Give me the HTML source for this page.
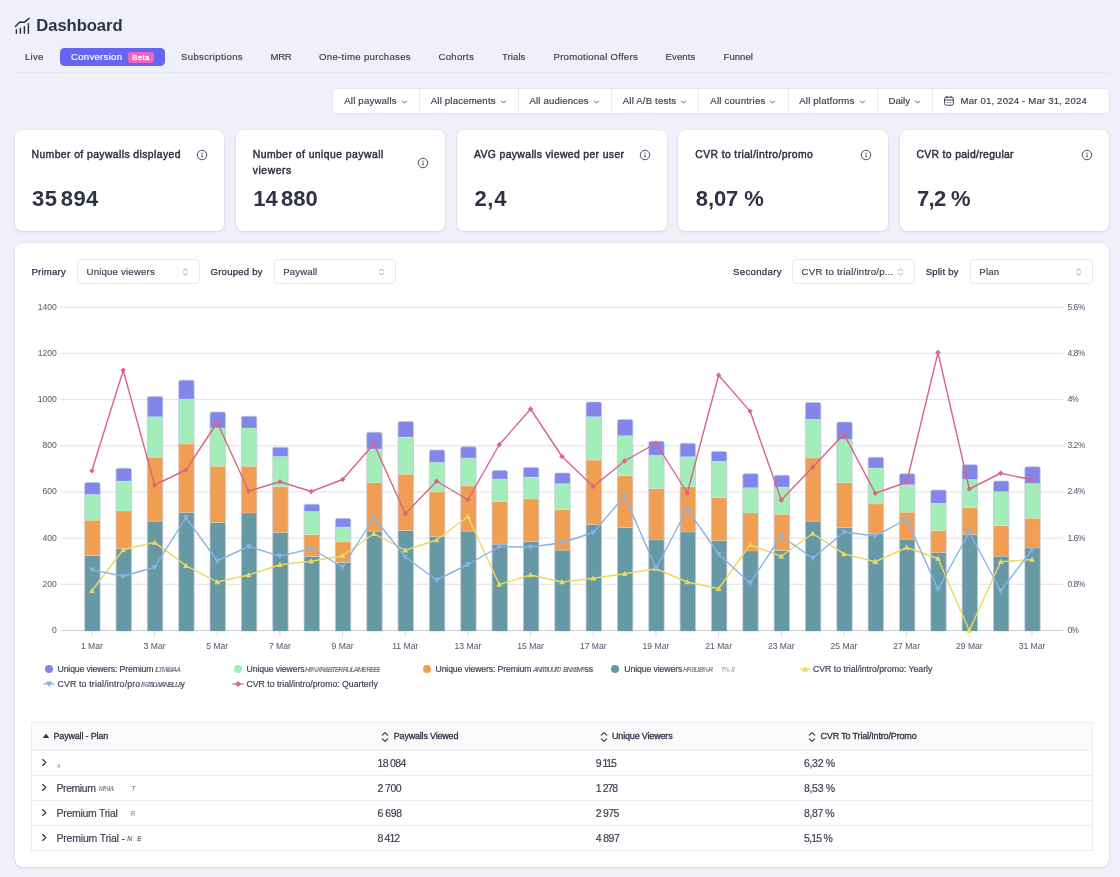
<!DOCTYPE html>
<html lang="en"><head><meta charset="utf-8"><title>Dashboard</title>
<style>
html,body{margin:0;padding:0;}
body{width:1120px;height:877px;overflow:hidden;background:#f0f0fa;font-family:"Liberation Sans",sans-serif;position:relative;}
.t{position:absolute;white-space:nowrap;font-family:"Liberation Sans",sans-serif;}
</style></head><body><div id="root" style="position:absolute;left:0;top:0;width:1120px;height:877px;will-change:transform;">
<svg style="position:absolute;left:0px;top:0px" width="40" height="40" viewBox="0 0 40 40" fill="none" stroke="#2f3147" stroke-width="1.5" stroke-linecap="round" stroke-linejoin="round">
<path d="M15.4 26.5L19.6 22.3Q19.9 22.1 20.3 22.1L24.2 22.2Q24.6 22.2 24.9 21.9L29.2 18.2"/><path d="M16.4 29.7V33.2"/><path d="M20.4 28.4V33.2"/><path d="M24.4 26.7V33.2"/><path d="M28.4 23.8V33.2"/></svg>
<span class="t" style="left:36.30px;top:15.60px;height:20px;line-height:20px;font-size:16.6px;color:#2f3147;font-weight:700;letter-spacing:-0.056px;">Dashboard</span>
<span class="t" style="left:25.00px;top:47.00px;height:20px;line-height:20px;font-size:9.6px;color:#3c3e54;-webkit-text-stroke:0.18px #3c3e54;letter-spacing:0.222px;">Live</span>
<div style="position:absolute;left:59.5px;top:47.5px;width:105.25px;height:18.799999999999997px;background:#6466f1;border-radius:4.5px;"></div>
<span class="t" style="left:71.00px;top:47.00px;height:20px;line-height:20px;font-size:9.6px;color:#ffffff;-webkit-text-stroke:0.18px #ffffff;letter-spacing:0.274px;">Conversion</span>
<div style="position:absolute;left:128.25px;top:52.3px;width:25.5px;height:10.300000000000004px;background:#f363c0;border-radius:3px;"></div>
<span class="t" style="left:132.30px;top:48.00px;height:20px;line-height:20px;font-size:7.7px;color:#ffffff;letter-spacing:0.390px;-webkit-text-stroke:0.3px #fff;">Beta</span>
<span class="t" style="left:181.00px;top:47.00px;height:20px;line-height:20px;font-size:9.6px;color:#3c3e54;-webkit-text-stroke:0.18px #3c3e54;letter-spacing:0.336px;">Subscriptions</span>
<span class="t" style="left:270.60px;top:47.00px;height:20px;line-height:20px;font-size:9.6px;color:#3c3e54;-webkit-text-stroke:0.18px #3c3e54;letter-spacing:-0.421px;">MRR</span>
<span class="t" style="left:319.00px;top:47.00px;height:20px;line-height:20px;font-size:9.6px;color:#3c3e54;-webkit-text-stroke:0.18px #3c3e54;letter-spacing:0.309px;">One-time purchases</span>
<span class="t" style="left:438.50px;top:47.00px;height:20px;line-height:20px;font-size:9.6px;color:#3c3e54;-webkit-text-stroke:0.18px #3c3e54;letter-spacing:0.269px;">Cohorts</span>
<span class="t" style="left:502.00px;top:47.00px;height:20px;line-height:20px;font-size:9.6px;color:#3c3e54;-webkit-text-stroke:0.18px #3c3e54;letter-spacing:0.065px;">Trials</span>
<span class="t" style="left:553.50px;top:47.00px;height:20px;line-height:20px;font-size:9.6px;color:#3c3e54;-webkit-text-stroke:0.18px #3c3e54;letter-spacing:0.258px;">Promotional Offers</span>
<span class="t" style="left:665.50px;top:47.00px;height:20px;line-height:20px;font-size:9.6px;color:#3c3e54;-webkit-text-stroke:0.18px #3c3e54;letter-spacing:0.108px;">Events</span>
<span class="t" style="left:723.50px;top:47.00px;height:20px;line-height:20px;font-size:9.6px;color:#3c3e54;-webkit-text-stroke:0.18px #3c3e54;letter-spacing:0.024px;">Funnel</span>
<div style="position:absolute;left:14px;top:71.6px;width:1095px;height:1.0px;background:#e6e6f1;"></div>
<div style="position:absolute;left:333px;top:89px;width:775.75px;height:23.5px;background:#fff;border-radius:4px;box-shadow:0 0 0 1px #e6e6f0, 0 1px 2px rgba(40,40,80,.06);"></div>
<div style="position:absolute;left:418.75px;top:89px;width:1.0px;height:23.5px;background:#e9e9f2;"></div>
<div style="position:absolute;left:517.75px;top:89px;width:1.0px;height:23.5px;background:#e9e9f2;"></div>
<div style="position:absolute;left:610.75px;top:89px;width:1.0px;height:23.5px;background:#e9e9f2;"></div>
<div style="position:absolute;left:697.75px;top:89px;width:1.0px;height:23.5px;background:#e9e9f2;"></div>
<div style="position:absolute;left:787.75px;top:89px;width:1.0px;height:23.5px;background:#e9e9f2;"></div>
<div style="position:absolute;left:876.5px;top:89px;width:1.0px;height:23.5px;background:#e9e9f2;"></div>
<div style="position:absolute;left:932.0px;top:89px;width:1.0px;height:23.5px;background:#e9e9f2;"></div>
<span class="t" style="left:344.25px;top:91.00px;height:20px;line-height:20px;font-size:9.6px;color:#3c3e54;-webkit-text-stroke:0.18px #3c3e54;letter-spacing:0.196px;">All paywalls</span>
<svg style="position:absolute;left:401px;top:98.55px" width="7" height="6" viewBox="-1 -3 7 6" fill="none" stroke="#5b5d75" stroke-width="1" stroke-linecap="round" stroke-linejoin="round"><path d="M0.4 -1.1L2.5 1.1L4.6 -1.1"/></svg>
<span class="t" style="left:430.75px;top:91.00px;height:20px;line-height:20px;font-size:9.6px;color:#3c3e54;-webkit-text-stroke:0.18px #3c3e54;letter-spacing:0.184px;">All placements</span>
<svg style="position:absolute;left:500px;top:98.55px" width="7" height="6" viewBox="-1 -3 7 6" fill="none" stroke="#5b5d75" stroke-width="1" stroke-linecap="round" stroke-linejoin="round"><path d="M0.4 -1.1L2.5 1.1L4.6 -1.1"/></svg>
<span class="t" style="left:529.50px;top:91.00px;height:20px;line-height:20px;font-size:9.6px;color:#3c3e54;-webkit-text-stroke:0.18px #3c3e54;letter-spacing:0.165px;">All audiences</span>
<svg style="position:absolute;left:593px;top:98.55px" width="7" height="6" viewBox="-1 -3 7 6" fill="none" stroke="#5b5d75" stroke-width="1" stroke-linecap="round" stroke-linejoin="round"><path d="M0.4 -1.1L2.5 1.1L4.6 -1.1"/></svg>
<span class="t" style="left:622.75px;top:91.00px;height:20px;line-height:20px;font-size:9.6px;color:#3c3e54;-webkit-text-stroke:0.18px #3c3e54;letter-spacing:0.175px;">All A/B tests</span>
<svg style="position:absolute;left:680px;top:98.55px" width="7" height="6" viewBox="-1 -3 7 6" fill="none" stroke="#5b5d75" stroke-width="1" stroke-linecap="round" stroke-linejoin="round"><path d="M0.4 -1.1L2.5 1.1L4.6 -1.1"/></svg>
<span class="t" style="left:710.25px;top:91.00px;height:20px;line-height:20px;font-size:9.6px;color:#3c3e54;-webkit-text-stroke:0.18px #3c3e54;letter-spacing:0.228px;">All countries</span>
<svg style="position:absolute;left:769px;top:98.55px" width="7" height="6" viewBox="-1 -3 7 6" fill="none" stroke="#5b5d75" stroke-width="1" stroke-linecap="round" stroke-linejoin="round"><path d="M0.4 -1.1L2.5 1.1L4.6 -1.1"/></svg>
<span class="t" style="left:799.25px;top:91.00px;height:20px;line-height:20px;font-size:9.6px;color:#3c3e54;-webkit-text-stroke:0.18px #3c3e54;letter-spacing:0.187px;">All platforms</span>
<svg style="position:absolute;left:858.5px;top:98.55px" width="7" height="6" viewBox="-1 -3 7 6" fill="none" stroke="#5b5d75" stroke-width="1" stroke-linecap="round" stroke-linejoin="round"><path d="M0.4 -1.1L2.5 1.1L4.6 -1.1"/></svg>
<span class="t" style="left:888.50px;top:91.00px;height:20px;line-height:20px;font-size:9.6px;color:#3c3e54;-webkit-text-stroke:0.18px #3c3e54;letter-spacing:0.032px;">Daily</span>
<svg style="position:absolute;left:914px;top:98.55px" width="7" height="6" viewBox="-1 -3 7 6" fill="none" stroke="#5b5d75" stroke-width="1" stroke-linecap="round" stroke-linejoin="round"><path d="M0.4 -1.1L2.5 1.1L4.6 -1.1"/></svg>
<svg style="position:absolute;left:943px;top:95px" width="12" height="12" viewBox="0 0 12 12" fill="none" stroke="#3f4159" stroke-width="1" stroke-linecap="round" stroke-linejoin="round"><rect x="1.6" y="2.2" width="8.7" height="8" rx="1.6"/><path d="M1.6 5H10.3"/><path d="M4 1.3V2.6"/><path d="M8 1.3V2.6"/><path d="M3.6 7.6H5.4M6.6 7.6H8.4" stroke-width="0.9" stroke-opacity="0.6"/></svg>
<span class="t" style="left:960.50px;top:91.00px;height:20px;line-height:20px;font-size:9.6px;color:#3c3e54;-webkit-text-stroke:0.18px #3c3e54;letter-spacing:0.179px;">Mar 01, 2024 - Mar 31, 2024</span>
<div style="position:absolute;left:14.5px;top:129.5px;width:209.5px;height:101.5px;background:#fff;border-radius:7px;box-shadow:0 0 0 0.5px rgba(40,40,60,.07),0 1px 2.5px rgba(30,30,50,.10);"></div>
<span class="t" style="left:31.50px;top:144.75px;height:20px;line-height:20px;font-size:10.4px;color:#2f3147;letter-spacing:0.405px;-webkit-text-stroke:0.45px #2f3147;">Number of paywalls displayed</span>
<svg style="position:absolute;left:196.0px;top:148.9px" width="12" height="12" viewBox="-6 -6 12 12" fill="none" stroke="#4a4d66" stroke-width="1"><circle cx="0" cy="0" r="4.75"/><path d="M0 -0.2V2.5" stroke-width="1.2" stroke-linecap="butt"/><circle cx="0" cy="-1.75" r="0.65" fill="#4a4d66" stroke="none"/></svg>
<span class="t" style="left:32.00px;top:189.30px;height:20px;line-height:20px;font-size:22px;color:#2f3147;font-weight:700;letter-spacing:0.454px;">35<i style="display:inline-block;width:3.30px"></i>894</span>
<div style="position:absolute;left:235.75px;top:129.5px;width:209.5px;height:101.5px;background:#fff;border-radius:7px;box-shadow:0 0 0 0.5px rgba(40,40,60,.07),0 1px 2.5px rgba(30,30,50,.10);"></div>
<span class="t" style="left:252.75px;top:144.75px;height:20px;line-height:20px;font-size:10.4px;color:#2f3147;letter-spacing:0.448px;-webkit-text-stroke:0.45px #2f3147;">Number of unique paywall</span>
<span class="t" style="left:252.75px;top:161.00px;height:20px;line-height:20px;font-size:10.4px;color:#2f3147;letter-spacing:0.535px;-webkit-text-stroke:0.45px #2f3147;">viewers</span>
<svg style="position:absolute;left:417.25px;top:156.95000000000002px" width="12" height="12" viewBox="-6 -6 12 12" fill="none" stroke="#4a4d66" stroke-width="1"><circle cx="0" cy="0" r="4.75"/><path d="M0 -0.2V2.5" stroke-width="1.2" stroke-linecap="butt"/><circle cx="0" cy="-1.75" r="0.65" fill="#4a4d66" stroke="none"/></svg>
<span class="t" style="left:253.25px;top:189.30px;height:20px;line-height:20px;font-size:22px;color:#2f3147;font-weight:700;letter-spacing:0.004px;">14<i style="display:inline-block;width:3.30px"></i>880</span>
<div style="position:absolute;left:457.0px;top:129.5px;width:209.5px;height:101.5px;background:#fff;border-radius:7px;box-shadow:0 0 0 0.5px rgba(40,40,60,.07),0 1px 2.5px rgba(30,30,50,.10);"></div>
<span class="t" style="left:474.00px;top:144.75px;height:20px;line-height:20px;font-size:10.4px;color:#2f3147;letter-spacing:0.365px;-webkit-text-stroke:0.45px #2f3147;">AVG paywalls viewed per user</span>
<svg style="position:absolute;left:638.5px;top:148.9px" width="12" height="12" viewBox="-6 -6 12 12" fill="none" stroke="#4a4d66" stroke-width="1"><circle cx="0" cy="0" r="4.75"/><path d="M0 -0.2V2.5" stroke-width="1.2" stroke-linecap="butt"/><circle cx="0" cy="-1.75" r="0.65" fill="#4a4d66" stroke="none"/></svg>
<span class="t" style="left:474.50px;top:189.30px;height:20px;line-height:20px;font-size:22px;color:#2f3147;font-weight:700;letter-spacing:0.639px;">2,4</span>
<div style="position:absolute;left:678.25px;top:129.5px;width:209.5px;height:101.5px;background:#fff;border-radius:7px;box-shadow:0 0 0 0.5px rgba(40,40,60,.07),0 1px 2.5px rgba(30,30,50,.10);"></div>
<span class="t" style="left:695.25px;top:144.75px;height:20px;line-height:20px;font-size:10.4px;color:#2f3147;letter-spacing:0.389px;-webkit-text-stroke:0.45px #2f3147;">CVR to trial/intro/promo</span>
<svg style="position:absolute;left:859.75px;top:148.9px" width="12" height="12" viewBox="-6 -6 12 12" fill="none" stroke="#4a4d66" stroke-width="1"><circle cx="0" cy="0" r="4.75"/><path d="M0 -0.2V2.5" stroke-width="1.2" stroke-linecap="butt"/><circle cx="0" cy="-1.75" r="0.65" fill="#4a4d66" stroke="none"/></svg>
<span class="t" style="left:695.75px;top:189.30px;height:20px;line-height:20px;font-size:22px;color:#2f3147;font-weight:700;letter-spacing:-0.082px;">8,07 %</span>
<div style="position:absolute;left:899.5px;top:129.5px;width:209.5px;height:101.5px;background:#fff;border-radius:7px;box-shadow:0 0 0 0.5px rgba(40,40,60,.07),0 1px 2.5px rgba(30,30,50,.10);"></div>
<span class="t" style="left:916.50px;top:144.75px;height:20px;line-height:20px;font-size:10.4px;color:#2f3147;letter-spacing:0.324px;-webkit-text-stroke:0.45px #2f3147;">CVR to paid/regular</span>
<svg style="position:absolute;left:1081.0px;top:148.9px" width="12" height="12" viewBox="-6 -6 12 12" fill="none" stroke="#4a4d66" stroke-width="1"><circle cx="0" cy="0" r="4.75"/><path d="M0 -0.2V2.5" stroke-width="1.2" stroke-linecap="butt"/><circle cx="0" cy="-1.75" r="0.65" fill="#4a4d66" stroke="none"/></svg>
<span class="t" style="left:917.00px;top:189.30px;height:20px;line-height:20px;font-size:22px;color:#2f3147;font-weight:700;letter-spacing:-0.651px;">7,2 %</span>
<div style="position:absolute;left:14.5px;top:242.5px;width:1094.25px;height:624.5px;background:#fff;border-radius:8px;box-shadow:0 0 0 0.5px rgba(40,40,60,.07),0 1px 2.5px rgba(30,30,50,.10);"></div>
<span class="t" style="left:31.50px;top:261.60px;height:20px;line-height:20px;font-size:9.6px;color:#2f3147;letter-spacing:0.205px;-webkit-text-stroke:0.25px #2f3147;">Primary</span>
<div style="position:absolute;left:77.0px;top:259.1px;width:122.75px;height:24.599999999999966px;background:#fff;border-radius:4.5px;box-shadow:inset 0 0 0 1px #e8e8ee;"></div>
<span class="t" style="left:86.50px;top:261.60px;height:20px;line-height:20px;font-size:9.6px;color:#3c3e54;-webkit-text-stroke:0.18px #3c3e54;letter-spacing:0.205px;">Unique viewers</span>
<svg style="position:absolute;left:181.5px;top:266.5px" width="7" height="10" viewBox="0 0 7 10" fill="none" stroke="#9698ab" stroke-width="0.95" stroke-linecap="round" stroke-linejoin="round"><path d="M1.5 3.6L3.5 1.9L5.5 3.6"/><path d="M1.5 6.4L3.5 8.1L5.5 6.4"/></svg>
<span class="t" style="left:210.50px;top:261.60px;height:20px;line-height:20px;font-size:9.6px;color:#2f3147;letter-spacing:0.213px;-webkit-text-stroke:0.25px #2f3147;">Grouped by</span>
<div style="position:absolute;left:273.75px;top:259.1px;width:122.5px;height:24.599999999999966px;background:#fff;border-radius:4.5px;box-shadow:inset 0 0 0 1px #e8e8ee;"></div>
<span class="t" style="left:283.25px;top:261.60px;height:20px;line-height:20px;font-size:9.6px;color:#3c3e54;-webkit-text-stroke:0.18px #3c3e54;letter-spacing:0.131px;">Paywall</span>
<svg style="position:absolute;left:378.0px;top:266.5px" width="7" height="10" viewBox="0 0 7 10" fill="none" stroke="#9698ab" stroke-width="0.95" stroke-linecap="round" stroke-linejoin="round"><path d="M1.5 3.6L3.5 1.9L5.5 3.6"/><path d="M1.5 6.4L3.5 8.1L5.5 6.4"/></svg>
<span class="t" style="left:733.00px;top:261.60px;height:20px;line-height:20px;font-size:9.6px;color:#2f3147;letter-spacing:0.323px;-webkit-text-stroke:0.25px #2f3147;">Secondary</span>
<div style="position:absolute;left:792.1px;top:259.1px;width:122.89999999999998px;height:24.599999999999966px;background:#fff;border-radius:4.5px;box-shadow:inset 0 0 0 1px #e8e8ee;"></div>
<span class="t" style="left:801.60px;top:261.60px;height:20px;line-height:20px;font-size:9.6px;color:#3c3e54;-webkit-text-stroke:0.18px #3c3e54;letter-spacing:0.242px;">CVR to trial/intro/p...</span>
<svg style="position:absolute;left:897.1px;top:266.5px" width="7" height="10" viewBox="0 0 7 10" fill="none" stroke="#9698ab" stroke-width="0.95" stroke-linecap="round" stroke-linejoin="round"><path d="M1.5 3.6L3.5 1.9L5.5 3.6"/><path d="M1.5 6.4L3.5 8.1L5.5 6.4"/></svg>
<span class="t" style="left:925.70px;top:261.60px;height:20px;line-height:20px;font-size:9.6px;color:#2f3147;letter-spacing:0.190px;-webkit-text-stroke:0.25px #2f3147;">Split by</span>
<div style="position:absolute;left:969.8px;top:259.1px;width:122.90000000000009px;height:24.599999999999966px;background:#fff;border-radius:4.5px;box-shadow:inset 0 0 0 1px #e8e8ee;"></div>
<span class="t" style="left:979.30px;top:261.60px;height:20px;line-height:20px;font-size:9.6px;color:#3c3e54;-webkit-text-stroke:0.18px #3c3e54;letter-spacing:0.196px;">Plan</span>
<svg style="position:absolute;left:1074.5px;top:266.5px" width="7" height="10" viewBox="0 0 7 10" fill="none" stroke="#9698ab" stroke-width="0.95" stroke-linecap="round" stroke-linejoin="round"><path d="M1.5 3.6L3.5 1.9L5.5 3.6"/><path d="M1.5 6.4L3.5 8.1L5.5 6.4"/></svg>
<svg style="position:absolute;left:0;top:0" width="1120" height="877" viewBox="0 0 1120 877">
<rect x="60.75" y="306.65" width="1002.5" height="1.2" fill="#e6e6e8"/>
<rect x="60.75" y="352.83" width="1002.5" height="1.2" fill="#e6e6e8"/>
<rect x="60.75" y="399.01" width="1002.5" height="1.2" fill="#e6e6e8"/>
<rect x="60.75" y="445.19" width="1002.5" height="1.2" fill="#e6e6e8"/>
<rect x="60.75" y="491.37" width="1002.5" height="1.2" fill="#e6e6e8"/>
<rect x="60.75" y="537.55" width="1002.5" height="1.2" fill="#e6e6e8"/>
<rect x="60.75" y="583.73" width="1002.5" height="1.2" fill="#e6e6e8"/>
<rect x="60.75" y="629.90" width="1002.5" height="1.2" fill="#d4d4d8"/>
<rect x="91.40" y="630.50" width="1" height="6.2" fill="#d6d6da"/>
<rect x="154.07" y="630.50" width="1" height="6.2" fill="#d6d6da"/>
<rect x="216.75" y="630.50" width="1" height="6.2" fill="#d6d6da"/>
<rect x="279.42" y="630.50" width="1" height="6.2" fill="#d6d6da"/>
<rect x="342.10" y="630.50" width="1" height="6.2" fill="#d6d6da"/>
<rect x="404.77" y="630.50" width="1" height="6.2" fill="#d6d6da"/>
<rect x="467.44" y="630.50" width="1" height="6.2" fill="#d6d6da"/>
<rect x="530.12" y="630.50" width="1" height="6.2" fill="#d6d6da"/>
<rect x="592.79" y="630.50" width="1" height="6.2" fill="#d6d6da"/>
<rect x="655.47" y="630.50" width="1" height="6.2" fill="#d6d6da"/>
<rect x="718.14" y="630.50" width="1" height="6.2" fill="#d6d6da"/>
<rect x="780.81" y="630.50" width="1" height="6.2" fill="#d6d6da"/>
<rect x="843.49" y="630.50" width="1" height="6.2" fill="#d6d6da"/>
<rect x="906.16" y="630.50" width="1" height="6.2" fill="#d6d6da"/>
<rect x="968.84" y="630.50" width="1" height="6.2" fill="#d6d6da"/>
<rect x="1031.51" y="630.50" width="1" height="6.2" fill="#d6d6da"/>
<rect x="84.70" y="555.60" width="15.4" height="75.50" fill="#6699a4"/>
<rect x="84.70" y="520.25" width="15.4" height="35.35" fill="#f09e52"/>
<rect x="84.70" y="494.50" width="15.4" height="25.75" fill="#a3edba"/>
<path d="M84.70 494.50V484.30Q84.70 482.50 86.50 482.50H98.30Q100.10 482.50 100.10 484.30V494.50Z" fill="#8087e8"/>
<rect x="84.70" y="494.10" width="15.4" height="0.8" fill="#ffffff" fill-opacity="0.28"/>
<rect x="84.70" y="519.85" width="15.4" height="0.8" fill="#ffffff" fill-opacity="0.28"/>
<rect x="84.70" y="555.20" width="15.4" height="0.8" fill="#ffffff" fill-opacity="0.28"/>
<path d="M84.70 630.50V484.30Q84.70 482.50 86.50 482.50H98.30Q100.10 482.50 100.10 484.30V630.50" stroke="#c4c5da" stroke-opacity="0.8" stroke-width="0.9" fill="none"/>
<rect x="116.04" y="548.75" width="15.4" height="82.35" fill="#6699a4"/>
<rect x="116.04" y="511.00" width="15.4" height="37.75" fill="#f09e52"/>
<rect x="116.04" y="481.00" width="15.4" height="30.00" fill="#a3edba"/>
<path d="M116.04 481.00V470.05Q116.04 468.25 117.84 468.25H129.64Q131.44 468.25 131.44 470.05V481.00Z" fill="#8087e8"/>
<rect x="116.04" y="480.60" width="15.4" height="0.8" fill="#ffffff" fill-opacity="0.28"/>
<rect x="116.04" y="510.60" width="15.4" height="0.8" fill="#ffffff" fill-opacity="0.28"/>
<rect x="116.04" y="548.35" width="15.4" height="0.8" fill="#ffffff" fill-opacity="0.28"/>
<path d="M116.04 630.50V470.05Q116.04 468.25 117.84 468.25H129.64Q131.44 468.25 131.44 470.05V630.50" stroke="#c4c5da" stroke-opacity="0.8" stroke-width="0.9" fill="none"/>
<rect x="147.37" y="521.25" width="15.4" height="109.85" fill="#6699a4"/>
<rect x="147.37" y="457.25" width="15.4" height="64.00" fill="#f09e52"/>
<rect x="147.37" y="416.75" width="15.4" height="40.50" fill="#a3edba"/>
<path d="M147.37 416.75V398.30Q147.37 396.50 149.17 396.50H160.97Q162.77 396.50 162.77 398.30V416.75Z" fill="#8087e8"/>
<rect x="147.37" y="416.35" width="15.4" height="0.8" fill="#ffffff" fill-opacity="0.28"/>
<rect x="147.37" y="456.85" width="15.4" height="0.8" fill="#ffffff" fill-opacity="0.28"/>
<rect x="147.37" y="520.85" width="15.4" height="0.8" fill="#ffffff" fill-opacity="0.28"/>
<path d="M147.37 630.50V398.30Q147.37 396.50 149.17 396.50H160.97Q162.77 396.50 162.77 398.30V630.50" stroke="#c4c5da" stroke-opacity="0.8" stroke-width="0.9" fill="none"/>
<rect x="178.71" y="512.50" width="15.4" height="118.60" fill="#6699a4"/>
<rect x="178.71" y="444.00" width="15.4" height="68.50" fill="#f09e52"/>
<rect x="178.71" y="399.00" width="15.4" height="45.00" fill="#a3edba"/>
<path d="M178.71 399.00V382.00Q178.71 380.20 180.51 380.20H192.31Q194.11 380.20 194.11 382.00V399.00Z" fill="#8087e8"/>
<rect x="178.71" y="398.60" width="15.4" height="0.8" fill="#ffffff" fill-opacity="0.28"/>
<rect x="178.71" y="443.60" width="15.4" height="0.8" fill="#ffffff" fill-opacity="0.28"/>
<rect x="178.71" y="512.10" width="15.4" height="0.8" fill="#ffffff" fill-opacity="0.28"/>
<path d="M178.71 630.50V382.00Q178.71 380.20 180.51 380.20H192.31Q194.11 380.20 194.11 382.00V630.50" stroke="#c4c5da" stroke-opacity="0.8" stroke-width="0.9" fill="none"/>
<rect x="210.05" y="522.50" width="15.4" height="108.60" fill="#6699a4"/>
<rect x="210.05" y="466.25" width="15.4" height="56.25" fill="#f09e52"/>
<rect x="210.05" y="428.00" width="15.4" height="38.25" fill="#a3edba"/>
<path d="M210.05 428.00V413.80Q210.05 412.00 211.85 412.00H223.65Q225.45 412.00 225.45 413.80V428.00Z" fill="#8087e8"/>
<rect x="210.05" y="427.60" width="15.4" height="0.8" fill="#ffffff" fill-opacity="0.28"/>
<rect x="210.05" y="465.85" width="15.4" height="0.8" fill="#ffffff" fill-opacity="0.28"/>
<rect x="210.05" y="522.10" width="15.4" height="0.8" fill="#ffffff" fill-opacity="0.28"/>
<path d="M210.05 630.50V413.80Q210.05 412.00 211.85 412.00H223.65Q225.45 412.00 225.45 413.80V630.50" stroke="#c4c5da" stroke-opacity="0.8" stroke-width="0.9" fill="none"/>
<rect x="241.39" y="513.00" width="15.4" height="118.10" fill="#6699a4"/>
<rect x="241.39" y="466.25" width="15.4" height="46.75" fill="#f09e52"/>
<rect x="241.39" y="428.00" width="15.4" height="38.25" fill="#a3edba"/>
<path d="M241.39 428.00V418.05Q241.39 416.25 243.19 416.25H254.99Q256.79 416.25 256.79 418.05V428.00Z" fill="#8087e8"/>
<rect x="241.39" y="427.60" width="15.4" height="0.8" fill="#ffffff" fill-opacity="0.28"/>
<rect x="241.39" y="465.85" width="15.4" height="0.8" fill="#ffffff" fill-opacity="0.28"/>
<rect x="241.39" y="512.60" width="15.4" height="0.8" fill="#ffffff" fill-opacity="0.28"/>
<path d="M241.39 630.50V418.05Q241.39 416.25 243.19 416.25H254.99Q256.79 416.25 256.79 418.05V630.50" stroke="#c4c5da" stroke-opacity="0.8" stroke-width="0.9" fill="none"/>
<rect x="272.72" y="532.50" width="15.4" height="98.60" fill="#6699a4"/>
<rect x="272.72" y="486.75" width="15.4" height="45.75" fill="#f09e52"/>
<rect x="272.72" y="456.50" width="15.4" height="30.25" fill="#a3edba"/>
<path d="M272.72 456.50V449.05Q272.72 447.25 274.52 447.25H286.32Q288.12 447.25 288.12 449.05V456.50Z" fill="#8087e8"/>
<rect x="272.72" y="456.10" width="15.4" height="0.8" fill="#ffffff" fill-opacity="0.28"/>
<rect x="272.72" y="486.35" width="15.4" height="0.8" fill="#ffffff" fill-opacity="0.28"/>
<rect x="272.72" y="532.10" width="15.4" height="0.8" fill="#ffffff" fill-opacity="0.28"/>
<path d="M272.72 630.50V449.05Q272.72 447.25 274.52 447.25H286.32Q288.12 447.25 288.12 449.05V630.50" stroke="#c4c5da" stroke-opacity="0.8" stroke-width="0.9" fill="none"/>
<rect x="304.06" y="556.50" width="15.4" height="74.60" fill="#6699a4"/>
<rect x="304.06" y="534.50" width="15.4" height="22.00" fill="#f09e52"/>
<rect x="304.06" y="511.50" width="15.4" height="23.00" fill="#a3edba"/>
<path d="M304.06 511.50V506.05Q304.06 504.25 305.86 504.25H317.66Q319.46 504.25 319.46 506.05V511.50Z" fill="#8087e8"/>
<rect x="304.06" y="511.10" width="15.4" height="0.8" fill="#ffffff" fill-opacity="0.28"/>
<rect x="304.06" y="534.10" width="15.4" height="0.8" fill="#ffffff" fill-opacity="0.28"/>
<rect x="304.06" y="556.10" width="15.4" height="0.8" fill="#ffffff" fill-opacity="0.28"/>
<path d="M304.06 630.50V506.05Q304.06 504.25 305.86 504.25H317.66Q319.46 504.25 319.46 506.05V630.50" stroke="#c4c5da" stroke-opacity="0.8" stroke-width="0.9" fill="none"/>
<rect x="335.40" y="562.60" width="15.4" height="68.50" fill="#6699a4"/>
<rect x="335.40" y="542.00" width="15.4" height="20.60" fill="#f09e52"/>
<rect x="335.40" y="527.00" width="15.4" height="15.00" fill="#a3edba"/>
<path d="M335.40 527.00V520.20Q335.40 518.40 337.20 518.40H349.00Q350.80 518.40 350.80 520.20V527.00Z" fill="#8087e8"/>
<rect x="335.40" y="526.60" width="15.4" height="0.8" fill="#ffffff" fill-opacity="0.28"/>
<rect x="335.40" y="541.60" width="15.4" height="0.8" fill="#ffffff" fill-opacity="0.28"/>
<rect x="335.40" y="562.20" width="15.4" height="0.8" fill="#ffffff" fill-opacity="0.28"/>
<path d="M335.40 630.50V520.20Q335.40 518.40 337.20 518.40H349.00Q350.80 518.40 350.80 520.20V630.50" stroke="#c4c5da" stroke-opacity="0.8" stroke-width="0.9" fill="none"/>
<rect x="366.73" y="531.25" width="15.4" height="99.85" fill="#6699a4"/>
<rect x="366.73" y="482.50" width="15.4" height="48.75" fill="#f09e52"/>
<rect x="366.73" y="449.00" width="15.4" height="33.50" fill="#a3edba"/>
<path d="M366.73 449.00V434.05Q366.73 432.25 368.53 432.25H380.33Q382.13 432.25 382.13 434.05V449.00Z" fill="#8087e8"/>
<rect x="366.73" y="448.60" width="15.4" height="0.8" fill="#ffffff" fill-opacity="0.28"/>
<rect x="366.73" y="482.10" width="15.4" height="0.8" fill="#ffffff" fill-opacity="0.28"/>
<rect x="366.73" y="530.85" width="15.4" height="0.8" fill="#ffffff" fill-opacity="0.28"/>
<path d="M366.73 630.50V434.05Q366.73 432.25 368.53 432.25H380.33Q382.13 432.25 382.13 434.05V630.50" stroke="#c4c5da" stroke-opacity="0.8" stroke-width="0.9" fill="none"/>
<rect x="398.07" y="530.50" width="15.4" height="100.60" fill="#6699a4"/>
<rect x="398.07" y="474.25" width="15.4" height="56.25" fill="#f09e52"/>
<rect x="398.07" y="437.00" width="15.4" height="37.25" fill="#a3edba"/>
<path d="M398.07 437.00V423.30Q398.07 421.50 399.87 421.50H411.67Q413.47 421.50 413.47 423.30V437.00Z" fill="#8087e8"/>
<rect x="398.07" y="436.60" width="15.4" height="0.8" fill="#ffffff" fill-opacity="0.28"/>
<rect x="398.07" y="473.85" width="15.4" height="0.8" fill="#ffffff" fill-opacity="0.28"/>
<rect x="398.07" y="530.10" width="15.4" height="0.8" fill="#ffffff" fill-opacity="0.28"/>
<path d="M398.07 630.50V423.30Q398.07 421.50 399.87 421.50H411.67Q413.47 421.50 413.47 423.30V630.50" stroke="#c4c5da" stroke-opacity="0.8" stroke-width="0.9" fill="none"/>
<rect x="429.41" y="536.50" width="15.4" height="94.60" fill="#6699a4"/>
<rect x="429.41" y="492.00" width="15.4" height="44.50" fill="#f09e52"/>
<rect x="429.41" y="462.50" width="15.4" height="29.50" fill="#a3edba"/>
<path d="M429.41 462.50V451.80Q429.41 450.00 431.21 450.00H443.01Q444.81 450.00 444.81 451.80V462.50Z" fill="#8087e8"/>
<rect x="429.41" y="462.10" width="15.4" height="0.8" fill="#ffffff" fill-opacity="0.28"/>
<rect x="429.41" y="491.60" width="15.4" height="0.8" fill="#ffffff" fill-opacity="0.28"/>
<rect x="429.41" y="536.10" width="15.4" height="0.8" fill="#ffffff" fill-opacity="0.28"/>
<path d="M429.41 630.50V451.80Q429.41 450.00 431.21 450.00H443.01Q444.81 450.00 444.81 451.80V630.50" stroke="#c4c5da" stroke-opacity="0.8" stroke-width="0.9" fill="none"/>
<rect x="460.74" y="531.25" width="15.4" height="99.85" fill="#6699a4"/>
<rect x="460.74" y="486.00" width="15.4" height="45.25" fill="#f09e52"/>
<rect x="460.74" y="458.00" width="15.4" height="28.00" fill="#a3edba"/>
<path d="M460.74 458.00V448.55Q460.74 446.75 462.54 446.75H474.34Q476.14 446.75 476.14 448.55V458.00Z" fill="#8087e8"/>
<rect x="460.74" y="457.60" width="15.4" height="0.8" fill="#ffffff" fill-opacity="0.28"/>
<rect x="460.74" y="485.60" width="15.4" height="0.8" fill="#ffffff" fill-opacity="0.28"/>
<rect x="460.74" y="530.85" width="15.4" height="0.8" fill="#ffffff" fill-opacity="0.28"/>
<path d="M460.74 630.50V448.55Q460.74 446.75 462.54 446.75H474.34Q476.14 446.75 476.14 448.55V630.50" stroke="#c4c5da" stroke-opacity="0.8" stroke-width="0.9" fill="none"/>
<rect x="492.08" y="544.25" width="15.4" height="86.85" fill="#6699a4"/>
<rect x="492.08" y="501.50" width="15.4" height="42.75" fill="#f09e52"/>
<rect x="492.08" y="479.00" width="15.4" height="22.50" fill="#a3edba"/>
<path d="M492.08 479.00V472.30Q492.08 470.50 493.88 470.50H505.68Q507.48 470.50 507.48 472.30V479.00Z" fill="#8087e8"/>
<rect x="492.08" y="478.60" width="15.4" height="0.8" fill="#ffffff" fill-opacity="0.28"/>
<rect x="492.08" y="501.10" width="15.4" height="0.8" fill="#ffffff" fill-opacity="0.28"/>
<rect x="492.08" y="543.85" width="15.4" height="0.8" fill="#ffffff" fill-opacity="0.28"/>
<path d="M492.08 630.50V472.30Q492.08 470.50 493.88 470.50H505.68Q507.48 470.50 507.48 472.30V630.50" stroke="#c4c5da" stroke-opacity="0.8" stroke-width="0.9" fill="none"/>
<rect x="523.42" y="541.50" width="15.4" height="89.60" fill="#6699a4"/>
<rect x="523.42" y="499.00" width="15.4" height="42.50" fill="#f09e52"/>
<rect x="523.42" y="477.00" width="15.4" height="22.00" fill="#a3edba"/>
<path d="M523.42 477.00V469.30Q523.42 467.50 525.22 467.50H537.02Q538.82 467.50 538.82 469.30V477.00Z" fill="#8087e8"/>
<rect x="523.42" y="476.60" width="15.4" height="0.8" fill="#ffffff" fill-opacity="0.28"/>
<rect x="523.42" y="498.60" width="15.4" height="0.8" fill="#ffffff" fill-opacity="0.28"/>
<rect x="523.42" y="541.10" width="15.4" height="0.8" fill="#ffffff" fill-opacity="0.28"/>
<path d="M523.42 630.50V469.30Q523.42 467.50 525.22 467.50H537.02Q538.82 467.50 538.82 469.30V630.50" stroke="#c4c5da" stroke-opacity="0.8" stroke-width="0.9" fill="none"/>
<rect x="554.75" y="550.25" width="15.4" height="80.85" fill="#6699a4"/>
<rect x="554.75" y="509.50" width="15.4" height="40.75" fill="#f09e52"/>
<rect x="554.75" y="483.75" width="15.4" height="25.75" fill="#a3edba"/>
<path d="M554.75 483.75V474.80Q554.75 473.00 556.55 473.00H568.36Q570.15 473.00 570.15 474.80V483.75Z" fill="#8087e8"/>
<rect x="554.75" y="483.35" width="15.4" height="0.8" fill="#ffffff" fill-opacity="0.28"/>
<rect x="554.75" y="509.10" width="15.4" height="0.8" fill="#ffffff" fill-opacity="0.28"/>
<rect x="554.75" y="549.85" width="15.4" height="0.8" fill="#ffffff" fill-opacity="0.28"/>
<path d="M554.75 630.50V474.80Q554.75 473.00 556.55 473.00H568.36Q570.15 473.00 570.15 474.80V630.50" stroke="#c4c5da" stroke-opacity="0.8" stroke-width="0.9" fill="none"/>
<rect x="586.09" y="524.40" width="15.4" height="106.70" fill="#6699a4"/>
<rect x="586.09" y="460.10" width="15.4" height="64.30" fill="#f09e52"/>
<rect x="586.09" y="416.75" width="15.4" height="43.35" fill="#a3edba"/>
<path d="M586.09 416.75V403.80Q586.09 402.00 587.89 402.00H599.69Q601.49 402.00 601.49 403.80V416.75Z" fill="#8087e8"/>
<rect x="586.09" y="416.35" width="15.4" height="0.8" fill="#ffffff" fill-opacity="0.28"/>
<rect x="586.09" y="459.70" width="15.4" height="0.8" fill="#ffffff" fill-opacity="0.28"/>
<rect x="586.09" y="524.00" width="15.4" height="0.8" fill="#ffffff" fill-opacity="0.28"/>
<path d="M586.09 630.50V403.80Q586.09 402.00 587.89 402.00H599.69Q601.49 402.00 601.49 403.80V630.50" stroke="#c4c5da" stroke-opacity="0.8" stroke-width="0.9" fill="none"/>
<rect x="617.43" y="527.50" width="15.4" height="103.60" fill="#6699a4"/>
<rect x="617.43" y="475.75" width="15.4" height="51.75" fill="#f09e52"/>
<rect x="617.43" y="435.75" width="15.4" height="40.00" fill="#a3edba"/>
<path d="M617.43 435.75V421.30Q617.43 419.50 619.23 419.50H631.03Q632.83 419.50 632.83 421.30V435.75Z" fill="#8087e8"/>
<rect x="617.43" y="435.35" width="15.4" height="0.8" fill="#ffffff" fill-opacity="0.28"/>
<rect x="617.43" y="475.35" width="15.4" height="0.8" fill="#ffffff" fill-opacity="0.28"/>
<rect x="617.43" y="527.10" width="15.4" height="0.8" fill="#ffffff" fill-opacity="0.28"/>
<path d="M617.43 630.50V421.30Q617.43 419.50 619.23 419.50H631.03Q632.83 419.50 632.83 421.30V630.50" stroke="#c4c5da" stroke-opacity="0.8" stroke-width="0.9" fill="none"/>
<rect x="648.77" y="540.00" width="15.4" height="91.10" fill="#6699a4"/>
<rect x="648.77" y="488.50" width="15.4" height="51.50" fill="#f09e52"/>
<rect x="648.77" y="455.25" width="15.4" height="33.25" fill="#a3edba"/>
<path d="M648.77 455.25V443.05Q648.77 441.25 650.57 441.25H662.37Q664.17 441.25 664.17 443.05V455.25Z" fill="#8087e8"/>
<rect x="648.77" y="454.85" width="15.4" height="0.8" fill="#ffffff" fill-opacity="0.28"/>
<rect x="648.77" y="488.10" width="15.4" height="0.8" fill="#ffffff" fill-opacity="0.28"/>
<rect x="648.77" y="539.60" width="15.4" height="0.8" fill="#ffffff" fill-opacity="0.28"/>
<path d="M648.77 630.50V443.05Q648.77 441.25 650.57 441.25H662.37Q664.17 441.25 664.17 443.05V630.50" stroke="#c4c5da" stroke-opacity="0.8" stroke-width="0.9" fill="none"/>
<rect x="680.10" y="532.00" width="15.4" height="99.10" fill="#6699a4"/>
<rect x="680.10" y="486.75" width="15.4" height="45.25" fill="#f09e52"/>
<rect x="680.10" y="456.75" width="15.4" height="30.00" fill="#a3edba"/>
<path d="M680.10 456.75V445.05Q680.10 443.25 681.90 443.25H693.70Q695.50 443.25 695.50 445.05V456.75Z" fill="#8087e8"/>
<rect x="680.10" y="456.35" width="15.4" height="0.8" fill="#ffffff" fill-opacity="0.28"/>
<rect x="680.10" y="486.35" width="15.4" height="0.8" fill="#ffffff" fill-opacity="0.28"/>
<rect x="680.10" y="531.60" width="15.4" height="0.8" fill="#ffffff" fill-opacity="0.28"/>
<path d="M680.10 630.50V445.05Q680.10 443.25 681.90 443.25H693.70Q695.50 443.25 695.50 445.05V630.50" stroke="#c4c5da" stroke-opacity="0.8" stroke-width="0.9" fill="none"/>
<rect x="711.44" y="540.75" width="15.4" height="90.35" fill="#6699a4"/>
<rect x="711.44" y="497.50" width="15.4" height="43.25" fill="#f09e52"/>
<rect x="711.44" y="461.25" width="15.4" height="36.25" fill="#a3edba"/>
<path d="M711.44 461.25V453.30Q711.44 451.50 713.24 451.50H725.04Q726.84 451.50 726.84 453.30V461.25Z" fill="#8087e8"/>
<rect x="711.44" y="460.85" width="15.4" height="0.8" fill="#ffffff" fill-opacity="0.28"/>
<rect x="711.44" y="497.10" width="15.4" height="0.8" fill="#ffffff" fill-opacity="0.28"/>
<rect x="711.44" y="540.35" width="15.4" height="0.8" fill="#ffffff" fill-opacity="0.28"/>
<path d="M711.44 630.50V453.30Q711.44 451.50 713.24 451.50H725.04Q726.84 451.50 726.84 453.30V630.50" stroke="#c4c5da" stroke-opacity="0.8" stroke-width="0.9" fill="none"/>
<rect x="742.78" y="551.00" width="15.4" height="80.10" fill="#6699a4"/>
<rect x="742.78" y="513.00" width="15.4" height="38.00" fill="#f09e52"/>
<rect x="742.78" y="487.75" width="15.4" height="25.25" fill="#a3edba"/>
<path d="M742.78 487.75V475.55Q742.78 473.75 744.58 473.75H756.38Q758.18 473.75 758.18 475.55V487.75Z" fill="#8087e8"/>
<rect x="742.78" y="487.35" width="15.4" height="0.8" fill="#ffffff" fill-opacity="0.28"/>
<rect x="742.78" y="512.60" width="15.4" height="0.8" fill="#ffffff" fill-opacity="0.28"/>
<rect x="742.78" y="550.60" width="15.4" height="0.8" fill="#ffffff" fill-opacity="0.28"/>
<path d="M742.78 630.50V475.55Q742.78 473.75 744.58 473.75H756.38Q758.18 473.75 758.18 475.55V630.50" stroke="#c4c5da" stroke-opacity="0.8" stroke-width="0.9" fill="none"/>
<rect x="774.11" y="550.50" width="15.4" height="80.60" fill="#6699a4"/>
<rect x="774.11" y="514.25" width="15.4" height="36.25" fill="#f09e52"/>
<rect x="774.11" y="487.00" width="15.4" height="27.25" fill="#a3edba"/>
<path d="M774.11 487.00V477.05Q774.11 475.25 775.91 475.25H787.71Q789.51 475.25 789.51 477.05V487.00Z" fill="#8087e8"/>
<rect x="774.11" y="486.60" width="15.4" height="0.8" fill="#ffffff" fill-opacity="0.28"/>
<rect x="774.11" y="513.85" width="15.4" height="0.8" fill="#ffffff" fill-opacity="0.28"/>
<rect x="774.11" y="550.10" width="15.4" height="0.8" fill="#ffffff" fill-opacity="0.28"/>
<path d="M774.11 630.50V477.05Q774.11 475.25 775.91 475.25H787.71Q789.51 475.25 789.51 477.05V630.50" stroke="#c4c5da" stroke-opacity="0.8" stroke-width="0.9" fill="none"/>
<rect x="805.45" y="521.25" width="15.4" height="109.85" fill="#6699a4"/>
<rect x="805.45" y="458.00" width="15.4" height="63.25" fill="#f09e52"/>
<rect x="805.45" y="419.25" width="15.4" height="38.75" fill="#a3edba"/>
<path d="M805.45 419.25V404.30Q805.45 402.50 807.25 402.50H819.05Q820.85 402.50 820.85 404.30V419.25Z" fill="#8087e8"/>
<rect x="805.45" y="418.85" width="15.4" height="0.8" fill="#ffffff" fill-opacity="0.28"/>
<rect x="805.45" y="457.60" width="15.4" height="0.8" fill="#ffffff" fill-opacity="0.28"/>
<rect x="805.45" y="520.85" width="15.4" height="0.8" fill="#ffffff" fill-opacity="0.28"/>
<path d="M805.45 630.50V404.30Q805.45 402.50 807.25 402.50H819.05Q820.85 402.50 820.85 404.30V630.50" stroke="#c4c5da" stroke-opacity="0.8" stroke-width="0.9" fill="none"/>
<rect x="836.79" y="527.75" width="15.4" height="103.35" fill="#6699a4"/>
<rect x="836.79" y="482.50" width="15.4" height="45.25" fill="#f09e52"/>
<rect x="836.79" y="439.50" width="15.4" height="43.00" fill="#a3edba"/>
<path d="M836.79 439.50V423.90Q836.79 422.10 838.59 422.10H850.39Q852.19 422.10 852.19 423.90V439.50Z" fill="#8087e8"/>
<rect x="836.79" y="439.10" width="15.4" height="0.8" fill="#ffffff" fill-opacity="0.28"/>
<rect x="836.79" y="482.10" width="15.4" height="0.8" fill="#ffffff" fill-opacity="0.28"/>
<rect x="836.79" y="527.35" width="15.4" height="0.8" fill="#ffffff" fill-opacity="0.28"/>
<path d="M836.79 630.50V423.90Q836.79 422.10 838.59 422.10H850.39Q852.19 422.10 852.19 423.90V630.50" stroke="#c4c5da" stroke-opacity="0.8" stroke-width="0.9" fill="none"/>
<rect x="868.12" y="533.75" width="15.4" height="97.35" fill="#6699a4"/>
<rect x="868.12" y="504.00" width="15.4" height="29.75" fill="#f09e52"/>
<rect x="868.12" y="468.00" width="15.4" height="36.00" fill="#a3edba"/>
<path d="M868.12 468.00V459.05Q868.12 457.25 869.92 457.25H881.72Q883.52 457.25 883.52 459.05V468.00Z" fill="#8087e8"/>
<rect x="868.12" y="467.60" width="15.4" height="0.8" fill="#ffffff" fill-opacity="0.28"/>
<rect x="868.12" y="503.60" width="15.4" height="0.8" fill="#ffffff" fill-opacity="0.28"/>
<rect x="868.12" y="533.35" width="15.4" height="0.8" fill="#ffffff" fill-opacity="0.28"/>
<path d="M868.12 630.50V459.05Q868.12 457.25 869.92 457.25H881.72Q883.52 457.25 883.52 459.05V630.50" stroke="#c4c5da" stroke-opacity="0.8" stroke-width="0.9" fill="none"/>
<rect x="899.46" y="539.25" width="15.4" height="91.85" fill="#6699a4"/>
<rect x="899.46" y="512.25" width="15.4" height="27.00" fill="#f09e52"/>
<rect x="899.46" y="484.75" width="15.4" height="27.50" fill="#a3edba"/>
<path d="M899.46 484.75V475.55Q899.46 473.75 901.26 473.75H913.06Q914.86 473.75 914.86 475.55V484.75Z" fill="#8087e8"/>
<rect x="899.46" y="484.35" width="15.4" height="0.8" fill="#ffffff" fill-opacity="0.28"/>
<rect x="899.46" y="511.85" width="15.4" height="0.8" fill="#ffffff" fill-opacity="0.28"/>
<rect x="899.46" y="538.85" width="15.4" height="0.8" fill="#ffffff" fill-opacity="0.28"/>
<path d="M899.46 630.50V475.55Q899.46 473.75 901.26 473.75H913.06Q914.86 473.75 914.86 475.55V630.50" stroke="#c4c5da" stroke-opacity="0.8" stroke-width="0.9" fill="none"/>
<rect x="930.80" y="552.50" width="15.4" height="78.60" fill="#6699a4"/>
<rect x="930.80" y="530.50" width="15.4" height="22.00" fill="#f09e52"/>
<rect x="930.80" y="503.25" width="15.4" height="27.25" fill="#a3edba"/>
<path d="M930.80 503.25V491.80Q930.80 490.00 932.60 490.00H944.40Q946.20 490.00 946.20 491.80V503.25Z" fill="#8087e8"/>
<rect x="930.80" y="502.85" width="15.4" height="0.8" fill="#ffffff" fill-opacity="0.28"/>
<rect x="930.80" y="530.10" width="15.4" height="0.8" fill="#ffffff" fill-opacity="0.28"/>
<rect x="930.80" y="552.10" width="15.4" height="0.8" fill="#ffffff" fill-opacity="0.28"/>
<path d="M930.80 630.50V491.80Q930.80 490.00 932.60 490.00H944.40Q946.20 490.00 946.20 491.80V630.50" stroke="#c4c5da" stroke-opacity="0.8" stroke-width="0.9" fill="none"/>
<rect x="962.14" y="534.75" width="15.4" height="96.35" fill="#6699a4"/>
<rect x="962.14" y="507.50" width="15.4" height="27.25" fill="#f09e52"/>
<rect x="962.14" y="479.50" width="15.4" height="28.00" fill="#a3edba"/>
<path d="M962.14 479.50V466.55Q962.14 464.75 963.94 464.75H975.74Q977.54 464.75 977.54 466.55V479.50Z" fill="#8087e8"/>
<rect x="962.14" y="479.10" width="15.4" height="0.8" fill="#ffffff" fill-opacity="0.28"/>
<rect x="962.14" y="507.10" width="15.4" height="0.8" fill="#ffffff" fill-opacity="0.28"/>
<rect x="962.14" y="534.35" width="15.4" height="0.8" fill="#ffffff" fill-opacity="0.28"/>
<path d="M962.14 630.50V466.55Q962.14 464.75 963.94 464.75H975.74Q977.54 464.75 977.54 466.55V630.50" stroke="#c4c5da" stroke-opacity="0.8" stroke-width="0.9" fill="none"/>
<rect x="993.47" y="556.25" width="15.4" height="74.85" fill="#6699a4"/>
<rect x="993.47" y="525.75" width="15.4" height="30.50" fill="#f09e52"/>
<rect x="993.47" y="491.75" width="15.4" height="34.00" fill="#a3edba"/>
<path d="M993.47 491.75V482.80Q993.47 481.00 995.27 481.00H1007.07Q1008.87 481.00 1008.87 482.80V491.75Z" fill="#8087e8"/>
<rect x="993.47" y="491.35" width="15.4" height="0.8" fill="#ffffff" fill-opacity="0.28"/>
<rect x="993.47" y="525.35" width="15.4" height="0.8" fill="#ffffff" fill-opacity="0.28"/>
<rect x="993.47" y="555.85" width="15.4" height="0.8" fill="#ffffff" fill-opacity="0.28"/>
<path d="M993.47 630.50V482.80Q993.47 481.00 995.27 481.00H1007.07Q1008.87 481.00 1008.87 482.80V630.50" stroke="#c4c5da" stroke-opacity="0.8" stroke-width="0.9" fill="none"/>
<rect x="1024.81" y="548.00" width="15.4" height="83.10" fill="#6699a4"/>
<rect x="1024.81" y="518.25" width="15.4" height="29.75" fill="#f09e52"/>
<rect x="1024.81" y="483.50" width="15.4" height="34.75" fill="#a3edba"/>
<path d="M1024.81 483.50V468.55Q1024.81 466.75 1026.61 466.75H1038.41Q1040.21 466.75 1040.21 468.55V483.50Z" fill="#8087e8"/>
<rect x="1024.81" y="483.10" width="15.4" height="0.8" fill="#ffffff" fill-opacity="0.28"/>
<rect x="1024.81" y="517.85" width="15.4" height="0.8" fill="#ffffff" fill-opacity="0.28"/>
<rect x="1024.81" y="547.60" width="15.4" height="0.8" fill="#ffffff" fill-opacity="0.28"/>
<path d="M1024.81 630.50V468.55Q1024.81 466.75 1026.61 466.75H1038.41Q1040.21 466.75 1040.21 468.55V630.50" stroke="#c4c5da" stroke-opacity="0.8" stroke-width="0.9" fill="none"/>
<polyline points="91.90,590.75 123.24,549.75 154.57,542.40 185.91,565.60 217.25,582.00 248.59,575.00 279.92,564.75 311.26,561.25 342.60,555.75 373.93,533.75 405.27,550.25 436.61,540.00 467.94,516.50 499.28,584.50 530.62,575.00 561.96,582.00 593.29,578.25 624.63,573.75 655.97,568.75 687.30,582.00 718.64,588.75 749.98,545.00 781.31,556.25 812.65,533.50 843.99,553.90 875.32,561.75 906.66,547.50 938.00,558.50 969.34,630.50 1000.67,561.75 1032.01,559.50" fill="none" stroke="#ebd95f" stroke-width="1.4" stroke-linejoin="round" stroke-linecap="round"/>
<path d="M91.90 587.85L94.80 593.05L89.00 593.05Z" fill="#ebd95f"/>
<path d="M123.24 546.85L126.14 552.05L120.34 552.05Z" fill="#ebd95f"/>
<path d="M154.57 539.50L157.47 544.70L151.67 544.70Z" fill="#ebd95f"/>
<path d="M185.91 562.70L188.81 567.90L183.01 567.90Z" fill="#ebd95f"/>
<path d="M217.25 579.10L220.15 584.30L214.35 584.30Z" fill="#ebd95f"/>
<path d="M248.59 572.10L251.49 577.30L245.69 577.30Z" fill="#ebd95f"/>
<path d="M279.92 561.85L282.82 567.05L277.02 567.05Z" fill="#ebd95f"/>
<path d="M311.26 558.35L314.16 563.55L308.36 563.55Z" fill="#ebd95f"/>
<path d="M342.60 552.85L345.50 558.05L339.70 558.05Z" fill="#ebd95f"/>
<path d="M373.93 530.85L376.83 536.05L371.03 536.05Z" fill="#ebd95f"/>
<path d="M405.27 547.35L408.17 552.55L402.37 552.55Z" fill="#ebd95f"/>
<path d="M436.61 537.10L439.51 542.30L433.71 542.30Z" fill="#ebd95f"/>
<path d="M467.94 513.60L470.84 518.80L465.04 518.80Z" fill="#ebd95f"/>
<path d="M499.28 581.60L502.18 586.80L496.38 586.80Z" fill="#ebd95f"/>
<path d="M530.62 572.10L533.52 577.30L527.72 577.30Z" fill="#ebd95f"/>
<path d="M561.96 579.10L564.86 584.30L559.06 584.30Z" fill="#ebd95f"/>
<path d="M593.29 575.35L596.19 580.55L590.39 580.55Z" fill="#ebd95f"/>
<path d="M624.63 570.85L627.53 576.05L621.73 576.05Z" fill="#ebd95f"/>
<path d="M655.97 565.85L658.87 571.05L653.07 571.05Z" fill="#ebd95f"/>
<path d="M687.30 579.10L690.20 584.30L684.40 584.30Z" fill="#ebd95f"/>
<path d="M718.64 585.85L721.54 591.05L715.74 591.05Z" fill="#ebd95f"/>
<path d="M749.98 542.10L752.88 547.30L747.08 547.30Z" fill="#ebd95f"/>
<path d="M781.31 553.35L784.21 558.55L778.41 558.55Z" fill="#ebd95f"/>
<path d="M812.65 530.60L815.55 535.80L809.75 535.80Z" fill="#ebd95f"/>
<path d="M843.99 551.00L846.89 556.20L841.09 556.20Z" fill="#ebd95f"/>
<path d="M875.32 558.85L878.22 564.05L872.42 564.05Z" fill="#ebd95f"/>
<path d="M906.66 544.60L909.56 549.80L903.76 549.80Z" fill="#ebd95f"/>
<path d="M938.00 555.60L940.90 560.80L935.10 560.80Z" fill="#ebd95f"/>
<path d="M969.34 627.60L972.24 632.80L966.44 632.80Z" fill="#ebd95f"/>
<path d="M1000.67 558.85L1003.57 564.05L997.77 564.05Z" fill="#ebd95f"/>
<path d="M1032.01 556.60L1034.91 561.80L1029.11 561.80Z" fill="#ebd95f"/>
<polyline points="91.90,569.90 123.24,576.25 154.57,567.25 185.91,517.60 217.25,560.75 248.59,546.50 279.92,556.10 311.26,548.75 342.60,567.00 373.93,517.50 405.27,557.00 436.61,580.00 467.94,564.50 499.28,546.75 530.62,547.00 561.96,542.75 593.29,532.50 624.63,496.00 655.97,568.25 687.30,509.00 718.64,554.25 749.98,583.00 781.31,536.00 812.65,558.25 843.99,532.00 875.32,536.00 906.66,519.10 938.00,589.25 969.34,532.25 1000.67,590.75 1032.01,549.75" fill="none" stroke="#86b4ea" stroke-width="1.4" stroke-linejoin="round" stroke-linecap="round"/>
<path d="M89.00 567.60L94.80 567.60L91.90 572.80Z" fill="#86b4ea"/>
<path d="M120.34 573.95L126.14 573.95L123.24 579.15Z" fill="#86b4ea"/>
<path d="M151.67 564.95L157.47 564.95L154.57 570.15Z" fill="#86b4ea"/>
<path d="M183.01 515.30L188.81 515.30L185.91 520.50Z" fill="#86b4ea"/>
<path d="M214.35 558.45L220.15 558.45L217.25 563.65Z" fill="#86b4ea"/>
<path d="M245.69 544.20L251.49 544.20L248.59 549.40Z" fill="#86b4ea"/>
<path d="M277.02 553.80L282.82 553.80L279.92 559.00Z" fill="#86b4ea"/>
<path d="M308.36 546.45L314.16 546.45L311.26 551.65Z" fill="#86b4ea"/>
<path d="M339.70 564.70L345.50 564.70L342.60 569.90Z" fill="#86b4ea"/>
<path d="M371.03 515.20L376.83 515.20L373.93 520.40Z" fill="#86b4ea"/>
<path d="M402.37 554.70L408.17 554.70L405.27 559.90Z" fill="#86b4ea"/>
<path d="M433.71 577.70L439.51 577.70L436.61 582.90Z" fill="#86b4ea"/>
<path d="M465.04 562.20L470.84 562.20L467.94 567.40Z" fill="#86b4ea"/>
<path d="M496.38 544.45L502.18 544.45L499.28 549.65Z" fill="#86b4ea"/>
<path d="M527.72 544.70L533.52 544.70L530.62 549.90Z" fill="#86b4ea"/>
<path d="M559.06 540.45L564.86 540.45L561.96 545.65Z" fill="#86b4ea"/>
<path d="M590.39 530.20L596.19 530.20L593.29 535.40Z" fill="#86b4ea"/>
<path d="M621.73 493.70L627.53 493.70L624.63 498.90Z" fill="#86b4ea"/>
<path d="M653.07 565.95L658.87 565.95L655.97 571.15Z" fill="#86b4ea"/>
<path d="M684.40 506.70L690.20 506.70L687.30 511.90Z" fill="#86b4ea"/>
<path d="M715.74 551.95L721.54 551.95L718.64 557.15Z" fill="#86b4ea"/>
<path d="M747.08 580.70L752.88 580.70L749.98 585.90Z" fill="#86b4ea"/>
<path d="M778.41 533.70L784.21 533.70L781.31 538.90Z" fill="#86b4ea"/>
<path d="M809.75 555.95L815.55 555.95L812.65 561.15Z" fill="#86b4ea"/>
<path d="M841.09 529.70L846.89 529.70L843.99 534.90Z" fill="#86b4ea"/>
<path d="M872.42 533.70L878.22 533.70L875.32 538.90Z" fill="#86b4ea"/>
<path d="M903.76 516.80L909.56 516.80L906.66 522.00Z" fill="#86b4ea"/>
<path d="M935.10 586.95L940.90 586.95L938.00 592.15Z" fill="#86b4ea"/>
<path d="M966.44 529.95L972.24 529.95L969.34 535.15Z" fill="#86b4ea"/>
<path d="M997.77 588.45L1003.57 588.45L1000.67 593.65Z" fill="#86b4ea"/>
<path d="M1029.11 547.45L1034.91 547.45L1032.01 552.65Z" fill="#86b4ea"/>
<polyline points="91.90,470.75 123.24,370.20 154.57,485.00 185.91,470.00 217.25,422.50 248.59,491.00 279.92,481.75 311.26,491.50 342.60,479.50 373.93,444.00 405.27,513.75 436.61,481.25 467.94,499.75 499.28,444.75 530.62,409.00 561.96,456.50 593.29,486.50 624.63,461.00 655.97,443.25 687.30,493.00 718.64,375.25 749.98,411.10 781.31,500.00 812.65,467.25 843.99,434.10 875.32,493.25 906.66,482.25 938.00,352.50 969.34,489.00 1000.67,473.25 1032.01,479.75" fill="none" stroke="#db6585" stroke-width="1.4" stroke-linejoin="round" stroke-linecap="round"/>
<path d="M91.90 468.05L94.60 470.75L91.90 473.45L89.20 470.75Z" fill="#db6585"/>
<path d="M123.24 367.50L125.94 370.20L123.24 372.90L120.54 370.20Z" fill="#db6585"/>
<path d="M154.57 482.30L157.27 485.00L154.57 487.70L151.87 485.00Z" fill="#db6585"/>
<path d="M185.91 467.30L188.61 470.00L185.91 472.70L183.21 470.00Z" fill="#db6585"/>
<path d="M217.25 419.80L219.95 422.50L217.25 425.20L214.55 422.50Z" fill="#db6585"/>
<path d="M248.59 488.30L251.28 491.00L248.59 493.70L245.89 491.00Z" fill="#db6585"/>
<path d="M279.92 479.05L282.62 481.75L279.92 484.45L277.22 481.75Z" fill="#db6585"/>
<path d="M311.26 488.80L313.96 491.50L311.26 494.20L308.56 491.50Z" fill="#db6585"/>
<path d="M342.60 476.80L345.30 479.50L342.60 482.20L339.90 479.50Z" fill="#db6585"/>
<path d="M373.93 441.30L376.63 444.00L373.93 446.70L371.23 444.00Z" fill="#db6585"/>
<path d="M405.27 511.05L407.97 513.75L405.27 516.45L402.57 513.75Z" fill="#db6585"/>
<path d="M436.61 478.55L439.31 481.25L436.61 483.95L433.91 481.25Z" fill="#db6585"/>
<path d="M467.94 497.05L470.64 499.75L467.94 502.45L465.24 499.75Z" fill="#db6585"/>
<path d="M499.28 442.05L501.98 444.75L499.28 447.45L496.58 444.75Z" fill="#db6585"/>
<path d="M530.62 406.30L533.32 409.00L530.62 411.70L527.92 409.00Z" fill="#db6585"/>
<path d="M561.96 453.80L564.66 456.50L561.96 459.20L559.25 456.50Z" fill="#db6585"/>
<path d="M593.29 483.80L595.99 486.50L593.29 489.20L590.59 486.50Z" fill="#db6585"/>
<path d="M624.63 458.30L627.33 461.00L624.63 463.70L621.93 461.00Z" fill="#db6585"/>
<path d="M655.97 440.55L658.67 443.25L655.97 445.95L653.27 443.25Z" fill="#db6585"/>
<path d="M687.30 490.30L690.00 493.00L687.30 495.70L684.60 493.00Z" fill="#db6585"/>
<path d="M718.64 372.55L721.34 375.25L718.64 377.95L715.94 375.25Z" fill="#db6585"/>
<path d="M749.98 408.40L752.68 411.10L749.98 413.80L747.28 411.10Z" fill="#db6585"/>
<path d="M781.31 497.30L784.01 500.00L781.31 502.70L778.61 500.00Z" fill="#db6585"/>
<path d="M812.65 464.55L815.35 467.25L812.65 469.95L809.95 467.25Z" fill="#db6585"/>
<path d="M843.99 431.40L846.69 434.10L843.99 436.80L841.29 434.10Z" fill="#db6585"/>
<path d="M875.32 490.55L878.02 493.25L875.32 495.95L872.62 493.25Z" fill="#db6585"/>
<path d="M906.66 479.55L909.36 482.25L906.66 484.95L903.96 482.25Z" fill="#db6585"/>
<path d="M938.00 349.80L940.70 352.50L938.00 355.20L935.30 352.50Z" fill="#db6585"/>
<path d="M969.34 486.30L972.04 489.00L969.34 491.70L966.64 489.00Z" fill="#db6585"/>
<path d="M1000.67 470.55L1003.37 473.25L1000.67 475.95L997.97 473.25Z" fill="#db6585"/>
<path d="M1032.01 477.05L1034.71 479.75L1032.01 482.45L1029.31 479.75Z" fill="#db6585"/>
</svg>
<span class="t" style="left:37.77px;top:296.65px;height:20px;line-height:20px;font-size:8.6px;color:#5b5d72;-webkit-text-stroke:0.05px #5b5d72;">1400</span>
<span class="t" style="left:37.77px;top:342.83px;height:20px;line-height:20px;font-size:8.6px;color:#5b5d72;-webkit-text-stroke:0.05px #5b5d72;">1200</span>
<span class="t" style="left:37.77px;top:389.01px;height:20px;line-height:20px;font-size:8.6px;color:#5b5d72;-webkit-text-stroke:0.05px #5b5d72;">1000</span>
<span class="t" style="left:42.55px;top:435.19px;height:20px;line-height:20px;font-size:8.6px;color:#5b5d72;-webkit-text-stroke:0.05px #5b5d72;">800</span>
<span class="t" style="left:42.55px;top:481.37px;height:20px;line-height:20px;font-size:8.6px;color:#5b5d72;-webkit-text-stroke:0.05px #5b5d72;">600</span>
<span class="t" style="left:42.55px;top:527.55px;height:20px;line-height:20px;font-size:8.6px;color:#5b5d72;-webkit-text-stroke:0.05px #5b5d72;">400</span>
<span class="t" style="left:42.55px;top:573.73px;height:20px;line-height:20px;font-size:8.6px;color:#5b5d72;-webkit-text-stroke:0.05px #5b5d72;">200</span>
<span class="t" style="left:52.12px;top:619.91px;height:20px;line-height:20px;font-size:8.6px;color:#5b5d72;-webkit-text-stroke:0.05px #5b5d72;">0</span>
<span class="t" style="left:1067.50px;top:296.65px;height:20px;line-height:20px;font-size:8.6px;color:#5b5d72;letter-spacing:-0.525px;-webkit-text-stroke:0.05px #5b5d72;">5.6%</span>
<span class="t" style="left:1067.50px;top:342.83px;height:20px;line-height:20px;font-size:8.6px;color:#5b5d72;letter-spacing:-0.525px;-webkit-text-stroke:0.05px #5b5d72;">4.8%</span>
<span class="t" style="left:1067.50px;top:389.01px;height:20px;line-height:20px;font-size:8.6px;color:#5b5d72;letter-spacing:-0.915px;-webkit-text-stroke:0.05px #5b5d72;">4%</span>
<span class="t" style="left:1067.50px;top:435.19px;height:20px;line-height:20px;font-size:8.6px;color:#5b5d72;letter-spacing:-0.525px;-webkit-text-stroke:0.05px #5b5d72;">3.2%</span>
<span class="t" style="left:1067.50px;top:481.37px;height:20px;line-height:20px;font-size:8.6px;color:#5b5d72;letter-spacing:-0.525px;-webkit-text-stroke:0.05px #5b5d72;">2.4%</span>
<span class="t" style="left:1067.50px;top:527.55px;height:20px;line-height:20px;font-size:8.6px;color:#5b5d72;letter-spacing:-0.525px;-webkit-text-stroke:0.05px #5b5d72;">1.6%</span>
<span class="t" style="left:1067.50px;top:573.73px;height:20px;line-height:20px;font-size:8.6px;color:#5b5d72;letter-spacing:-0.525px;-webkit-text-stroke:0.05px #5b5d72;">0.8%</span>
<span class="t" style="left:1067.50px;top:619.91px;height:20px;line-height:20px;font-size:8.6px;color:#5b5d72;letter-spacing:-0.915px;-webkit-text-stroke:0.05px #5b5d72;">0%</span>
<span class="t" style="left:80.91px;top:636.40px;height:20px;line-height:20px;font-size:8.6px;color:#5b5d72;-webkit-text-stroke:0.05px #5b5d72;">1 Mar</span>
<span class="t" style="left:143.58px;top:636.40px;height:20px;line-height:20px;font-size:8.6px;color:#5b5d72;-webkit-text-stroke:0.05px #5b5d72;">3 Mar</span>
<span class="t" style="left:206.26px;top:636.40px;height:20px;line-height:20px;font-size:8.6px;color:#5b5d72;-webkit-text-stroke:0.05px #5b5d72;">5 Mar</span>
<span class="t" style="left:268.93px;top:636.40px;height:20px;line-height:20px;font-size:8.6px;color:#5b5d72;-webkit-text-stroke:0.05px #5b5d72;">7 Mar</span>
<span class="t" style="left:331.60px;top:636.40px;height:20px;line-height:20px;font-size:8.6px;color:#5b5d72;-webkit-text-stroke:0.05px #5b5d72;">9 Mar</span>
<span class="t" style="left:392.21px;top:636.40px;height:20px;line-height:20px;font-size:8.6px;color:#5b5d72;-webkit-text-stroke:0.05px #5b5d72;">11 Mar</span>
<span class="t" style="left:454.56px;top:636.40px;height:20px;line-height:20px;font-size:8.6px;color:#5b5d72;-webkit-text-stroke:0.05px #5b5d72;">13 Mar</span>
<span class="t" style="left:517.23px;top:636.40px;height:20px;line-height:20px;font-size:8.6px;color:#5b5d72;-webkit-text-stroke:0.05px #5b5d72;">15 Mar</span>
<span class="t" style="left:579.91px;top:636.40px;height:20px;line-height:20px;font-size:8.6px;color:#5b5d72;-webkit-text-stroke:0.05px #5b5d72;">17 Mar</span>
<span class="t" style="left:642.58px;top:636.40px;height:20px;line-height:20px;font-size:8.6px;color:#5b5d72;-webkit-text-stroke:0.05px #5b5d72;">19 Mar</span>
<span class="t" style="left:705.26px;top:636.40px;height:20px;line-height:20px;font-size:8.6px;color:#5b5d72;-webkit-text-stroke:0.05px #5b5d72;">21 Mar</span>
<span class="t" style="left:767.93px;top:636.40px;height:20px;line-height:20px;font-size:8.6px;color:#5b5d72;-webkit-text-stroke:0.05px #5b5d72;">23 Mar</span>
<span class="t" style="left:830.60px;top:636.40px;height:20px;line-height:20px;font-size:8.6px;color:#5b5d72;-webkit-text-stroke:0.05px #5b5d72;">25 Mar</span>
<span class="t" style="left:893.28px;top:636.40px;height:20px;line-height:20px;font-size:8.6px;color:#5b5d72;-webkit-text-stroke:0.05px #5b5d72;">27 Mar</span>
<span class="t" style="left:955.95px;top:636.40px;height:20px;line-height:20px;font-size:8.6px;color:#5b5d72;-webkit-text-stroke:0.05px #5b5d72;">29 Mar</span>
<span class="t" style="left:1018.63px;top:636.40px;height:20px;line-height:20px;font-size:8.6px;color:#5b5d72;-webkit-text-stroke:0.05px #5b5d72;">31 Mar</span>
<div style="position:absolute;left:44.5px;top:665.3px;width:8.2px;height:8.2px;border-radius:50%;background:#8087e8"></div>
<span class="t" style="left:57.50px;top:659.40px;height:20px;line-height:20px;font-size:8.7px;color:#3c3e54;-webkit-text-stroke:0.18px #3c3e54;letter-spacing:-0.136px;">Unique viewers: Premium</span>
<span class="t" style="left:155.0px;top:660.09px;width:33.0px;overflow:hidden;height:20px;line-height:20px;font-size:7px;font-weight:700;font-style:italic;letter-spacing:-1.2px;color:#3c3e54;opacity:0.63;filter:blur(0.4px);white-space:pre">ILTM I&IAA </span>
<div style="position:absolute;left:233.5px;top:665.3px;width:8.2px;height:8.2px;border-radius:50%;background:#a3edba"></div>
<span class="t" style="left:246.50px;top:659.40px;height:20px;line-height:20px;font-size:8.7px;color:#3c3e54;-webkit-text-stroke:0.18px #3c3e54;letter-spacing:-0.106px;">Unique viewers</span>
<span class="t" style="left:305.0px;top:660.09px;width:75.0px;overflow:hidden;height:20px;line-height:20px;font-size:7px;font-weight:700;font-style:italic;letter-spacing:-1.2px;color:#3c3e54;opacity:0.66;filter:blur(0.4px);white-space:pre">H8%XR&BTER RULAME REEE </span>
<div style="position:absolute;left:422.5px;top:665.3px;width:8.2px;height:8.2px;border-radius:50%;background:#f09e52"></div>
<span class="t" style="left:435.50px;top:659.40px;height:20px;line-height:20px;font-size:8.7px;color:#3c3e54;-webkit-text-stroke:0.18px #3c3e54;letter-spacing:-0.136px;">Unique viewers: Premium</span>
<span class="t" style="left:533.0px;top:660.09px;width:28.0px;overflow:hidden;height:20px;line-height:20px;font-size:7px;font-weight:700;font-style:italic;letter-spacing:-1.2px;color:#3c3e54;opacity:0.72;filter:blur(0.4px);white-space:pre">ANIT8UUITX</span>
<span class="t" style="left:563.0px;top:660.09px;width:22.0px;overflow:hidden;height:20px;line-height:20px;font-size:7px;font-weight:700;font-style:italic;letter-spacing:-1.2px;color:#3c3e54;opacity:0.72;filter:blur(0.4px);white-space:pre">BNX8M%TB</span>
<span class="t" style="left:584.50px;top:659.40px;height:20px;line-height:20px;font-size:8.7px;color:#3c3e54;-webkit-text-stroke:0.18px #3c3e54;">ss</span>
<div style="position:absolute;left:611.3px;top:665.3px;width:8.2px;height:8.2px;border-radius:50%;background:#6699a4"></div>
<span class="t" style="left:624.30px;top:659.40px;height:20px;line-height:20px;font-size:8.7px;color:#3c3e54;-webkit-text-stroke:0.18px #3c3e54;letter-spacing:-0.106px;">Unique viewers</span>
<span class="t" style="left:683.0px;top:660.09px;width:32.0px;overflow:hidden;height:20px;line-height:20px;font-size:7px;font-weight:700;font-style:italic;letter-spacing:-1.2px;color:#3c3e54;opacity:0.60;filter:blur(0.4px);white-space:pre">HR 8LI B% R</span>
<span class="t" style="left:720.0px;top:660.09px;width:18.0px;overflow:hidden;height:20px;line-height:20px;font-size:7px;font-weight:700;font-style:italic;letter-spacing:-1.2px;color:#3c3e54;opacity:0.39;filter:blur(0.4px);white-space:pre"> T%   8</span>
<svg style="position:absolute;left:797.5px;top:665.4px" width="14" height="8" viewBox="-7 -4 14 8"><path d="M-5.5 0H5.5" stroke="#ebd95f" stroke-width="1.3"/><path d="M0 -3L3.2 2.4L-3.2 2.4Z" fill="#ebd95f"/></svg>
<span class="t" style="left:813.00px;top:659.40px;height:20px;line-height:20px;font-size:8.7px;color:#3c3e54;-webkit-text-stroke:0.18px #3c3e54;letter-spacing:0.002px;">CVR to trial/intro/promo: Yearly</span>
<svg style="position:absolute;left:41.6px;top:680.4px" width="14" height="8" viewBox="-7 -4 14 8"><path d="M-5.5 0H5.5" stroke="#86b4ea" stroke-width="1.3"/><path d="M-3.2 -2.4L3.2 -2.4L0 3Z" fill="#86b4ea"/></svg>
<span class="t" style="left:57.50px;top:674.40px;height:20px;line-height:20px;font-size:8.7px;color:#3c3e54;-webkit-text-stroke:0.18px #3c3e54;letter-spacing:0.190px;">CVR to trial/intro/pro</span>
<span class="t" style="left:141.0px;top:675.09px;width:40.0px;overflow:hidden;height:20px;line-height:20px;font-size:7px;font-weight:700;font-style:italic;letter-spacing:-1.2px;color:#3c3e54;opacity:0.75;filter:blur(0.4px);white-space:pre">I%T8LWANBLL8N</span>
<span class="t" style="left:180.50px;top:674.40px;height:20px;line-height:20px;font-size:8.7px;color:#3c3e54;-webkit-text-stroke:0.18px #3c3e54;">y</span>
<svg style="position:absolute;left:230.6px;top:680.4px" width="14" height="8" viewBox="-7 -4 14 8"><path d="M-5.5 0H5.5" stroke="#db6585" stroke-width="1.3"/><path d="M0 -3L3 0L0 3L-3 0Z" fill="#db6585"/></svg>
<span class="t" style="left:246.50px;top:674.40px;height:20px;line-height:20px;font-size:8.7px;color:#3c3e54;-webkit-text-stroke:0.18px #3c3e54;">CVR to trial/intro/promo: Quarterly</span>
<div style="position:absolute;left:31px;top:722.3px;width:1061.5px;height:128.45000000000005px;background:#fff;box-shadow:inset 0 0 0 1px #ececf0;"></div>
<div style="position:absolute;left:32px;top:723.3px;width:1059.5px;height:26.700000000000045px;background:#fafafb;"></div>
<div style="position:absolute;left:31px;top:749.75px;width:1061.5px;height:1.0px;background:#ececf0;"></div>
<div style="position:absolute;left:31px;top:775px;width:1061.5px;height:1px;background:#ececf0;"></div>
<div style="position:absolute;left:31px;top:800px;width:1061.5px;height:1px;background:#ececf0;"></div>
<div style="position:absolute;left:31px;top:825px;width:1061.5px;height:1px;background:#ececf0;"></div>
<svg style="position:absolute;left:41.5px;top:733.2px" width="8" height="6" viewBox="0 0 8 6"><path d="M4 0.8L7.3 5H0.7Z" fill="#2f3147"/></svg>
<span class="t" style="left:53.50px;top:726.00px;height:20px;line-height:20px;font-size:9px;color:#2f3147;letter-spacing:-0.180px;-webkit-text-stroke:0.3px #2f3147;">Paywall - Plan</span>
<svg style="position:absolute;left:381px;top:730.65px" width="8" height="12" viewBox="-4 -6 8 12" fill="none" stroke="#3a3c54" stroke-width="1.25" stroke-linecap="round" stroke-linejoin="round"><path d="M-2.7 -1.9L0 -4.4L2.7 -1.9"/><path d="M-2.7 1.9L0 4.4L2.7 1.9"/></svg>
<span class="t" style="left:393.75px;top:726.00px;height:20px;line-height:20px;font-size:9px;color:#2f3147;letter-spacing:-0.191px;-webkit-text-stroke:0.3px #2f3147;">Paywalls Viewed</span>
<svg style="position:absolute;left:599.5px;top:730.65px" width="8" height="12" viewBox="-4 -6 8 12" fill="none" stroke="#3a3c54" stroke-width="1.25" stroke-linecap="round" stroke-linejoin="round"><path d="M-2.7 -1.9L0 -4.4L2.7 -1.9"/><path d="M-2.7 1.9L0 4.4L2.7 1.9"/></svg>
<span class="t" style="left:612.00px;top:726.00px;height:20px;line-height:20px;font-size:9px;color:#2f3147;letter-spacing:-0.169px;-webkit-text-stroke:0.3px #2f3147;">Unique Viewers</span>
<svg style="position:absolute;left:808.25px;top:730.65px" width="8" height="12" viewBox="-4 -6 8 12" fill="none" stroke="#3a3c54" stroke-width="1.25" stroke-linecap="round" stroke-linejoin="round"><path d="M-2.7 -1.9L0 -4.4L2.7 -1.9"/><path d="M-2.7 1.9L0 4.4L2.7 1.9"/></svg>
<span class="t" style="left:820.50px;top:726.00px;height:20px;line-height:20px;font-size:9px;color:#2f3147;letter-spacing:-0.161px;-webkit-text-stroke:0.3px #2f3147;">CVR To Trial/Intro/Promo</span>
<svg style="position:absolute;left:40.5px;top:758.25px" width="7" height="9" viewBox="0 0 7 9" fill="none" stroke="#2f3147" stroke-width="1.15" stroke-linecap="round" stroke-linejoin="round"><path d="M1.6 1.5L4.9 4.5L1.6 7.5"/></svg>
<span class="t" style="left:377.50px;top:752.75px;height:20px;line-height:20px;font-size:10.5px;color:#3c3e54;-webkit-text-stroke:0.18px #3c3e54;letter-spacing:-0.610px;">18<i style="display:inline-block;width:2.10px"></i>084</span>
<span class="t" style="left:595.75px;top:752.75px;height:20px;line-height:20px;font-size:10.5px;color:#3c3e54;-webkit-text-stroke:0.18px #3c3e54;letter-spacing:-1.232px;">9<i style="display:inline-block;width:2.10px"></i>115</span>
<span class="t" style="left:804.00px;top:752.75px;height:20px;line-height:20px;font-size:10.5px;color:#3c3e54;-webkit-text-stroke:0.18px #3c3e54;letter-spacing:-0.323px;">6,32 %</span>
<svg style="position:absolute;left:40.5px;top:783.3px" width="7" height="9" viewBox="0 0 7 9" fill="none" stroke="#2f3147" stroke-width="1.15" stroke-linecap="round" stroke-linejoin="round"><path d="M1.6 1.5L4.9 4.5L1.6 7.5"/></svg>
<span class="t" style="left:56.50px;top:777.80px;height:20px;line-height:20px;font-size:10.5px;color:#3c3e54;-webkit-text-stroke:0.18px #3c3e54;letter-spacing:-0.430px;">Premium</span>
<span class="t" style="left:377.50px;top:777.80px;height:20px;line-height:20px;font-size:10.5px;color:#3c3e54;-webkit-text-stroke:0.18px #3c3e54;letter-spacing:-0.427px;">2<i style="display:inline-block;width:2.10px"></i>700</span>
<span class="t" style="left:595.75px;top:777.80px;height:20px;line-height:20px;font-size:10.5px;color:#3c3e54;-webkit-text-stroke:0.18px #3c3e54;letter-spacing:-1.052px;">1<i style="display:inline-block;width:2.10px"></i>278</span>
<span class="t" style="left:804.00px;top:777.80px;height:20px;line-height:20px;font-size:10.5px;color:#3c3e54;-webkit-text-stroke:0.18px #3c3e54;letter-spacing:-0.323px;">8,53 %</span>
<svg style="position:absolute;left:40.5px;top:808.4px" width="7" height="9" viewBox="0 0 7 9" fill="none" stroke="#2f3147" stroke-width="1.15" stroke-linecap="round" stroke-linejoin="round"><path d="M1.6 1.5L4.9 4.5L1.6 7.5"/></svg>
<span class="t" style="left:56.50px;top:802.90px;height:20px;line-height:20px;font-size:10.5px;color:#3c3e54;-webkit-text-stroke:0.18px #3c3e54;letter-spacing:-0.289px;">Premium Trial</span>
<span class="t" style="left:377.50px;top:802.90px;height:20px;line-height:20px;font-size:10.5px;color:#3c3e54;-webkit-text-stroke:0.18px #3c3e54;letter-spacing:-0.302px;">6<i style="display:inline-block;width:2.10px"></i>698</span>
<span class="t" style="left:595.75px;top:802.90px;height:20px;line-height:20px;font-size:10.5px;color:#3c3e54;-webkit-text-stroke:0.18px #3c3e54;letter-spacing:-0.615px;">2<i style="display:inline-block;width:2.10px"></i>975</span>
<span class="t" style="left:804.00px;top:802.90px;height:20px;line-height:20px;font-size:10.5px;color:#3c3e54;-webkit-text-stroke:0.18px #3c3e54;letter-spacing:-0.407px;">8,87 %</span>
<svg style="position:absolute;left:40.5px;top:833.4px" width="7" height="9" viewBox="0 0 7 9" fill="none" stroke="#2f3147" stroke-width="1.15" stroke-linecap="round" stroke-linejoin="round"><path d="M1.6 1.5L4.9 4.5L1.6 7.5"/></svg>
<span class="t" style="left:56.50px;top:827.90px;height:20px;line-height:20px;font-size:10.5px;color:#3c3e54;-webkit-text-stroke:0.18px #3c3e54;letter-spacing:-0.192px;">Premium Trial -</span>
<span class="t" style="left:377.50px;top:827.90px;height:20px;line-height:20px;font-size:10.5px;color:#3c3e54;-webkit-text-stroke:0.18px #3c3e54;letter-spacing:-0.927px;">8<i style="display:inline-block;width:2.10px"></i>412</span>
<span class="t" style="left:595.75px;top:827.90px;height:20px;line-height:20px;font-size:10.5px;color:#3c3e54;-webkit-text-stroke:0.18px #3c3e54;letter-spacing:-0.490px;">4<i style="display:inline-block;width:2.10px"></i>897</span>
<span class="t" style="left:804.00px;top:827.90px;height:20px;line-height:20px;font-size:10.5px;color:#3c3e54;-webkit-text-stroke:0.18px #3c3e54;letter-spacing:-0.782px;">5,15 %</span>
<span class="t" style="left:57.0px;top:756.41px;width:3.0px;overflow:hidden;height:20px;line-height:20px;font-size:5px;font-weight:700;font-style:italic;letter-spacing:-1.2px;color:#3c3e54;opacity:0.42;filter:blur(0.4px);white-space:pre"># E</span>
<span class="t" style="left:98.0px;top:779.01px;width:16.0px;overflow:hidden;height:20px;line-height:20px;font-size:7px;font-weight:700;font-style:italic;letter-spacing:-1.2px;color:#3c3e54;opacity:0.60;filter:blur(0.4px);white-space:pre"> M%WHU</span>
<span class="t" style="left:129.0px;top:779.01px;width:8.0px;overflow:hidden;height:20px;line-height:20px;font-size:7px;font-weight:700;font-style:italic;letter-spacing:-1.2px;color:#3c3e54;opacity:0.54;filter:blur(0.4px);white-space:pre">   T</span>
<span class="t" style="left:129.0px;top:804.11px;width:6.0px;overflow:hidden;height:20px;line-height:20px;font-size:7px;font-weight:700;font-style:italic;letter-spacing:-1.2px;color:#3c3e54;opacity:0.48;filter:blur(0.4px);white-space:pre">  R</span>
<span class="t" style="left:127.0px;top:829.11px;width:5.0px;overflow:hidden;height:20px;line-height:20px;font-size:7px;font-weight:700;font-style:italic;letter-spacing:-1.2px;color:#3c3e54;opacity:0.72;filter:blur(0.4px);white-space:pre">MZN</span>
<span class="t" style="left:137.0px;top:829.11px;width:4.0px;overflow:hidden;height:20px;line-height:20px;font-size:7px;font-weight:700;font-style:italic;letter-spacing:-1.2px;color:#3c3e54;opacity:0.72;filter:blur(0.4px);white-space:pre">E#N</span>
</div></body></html>
